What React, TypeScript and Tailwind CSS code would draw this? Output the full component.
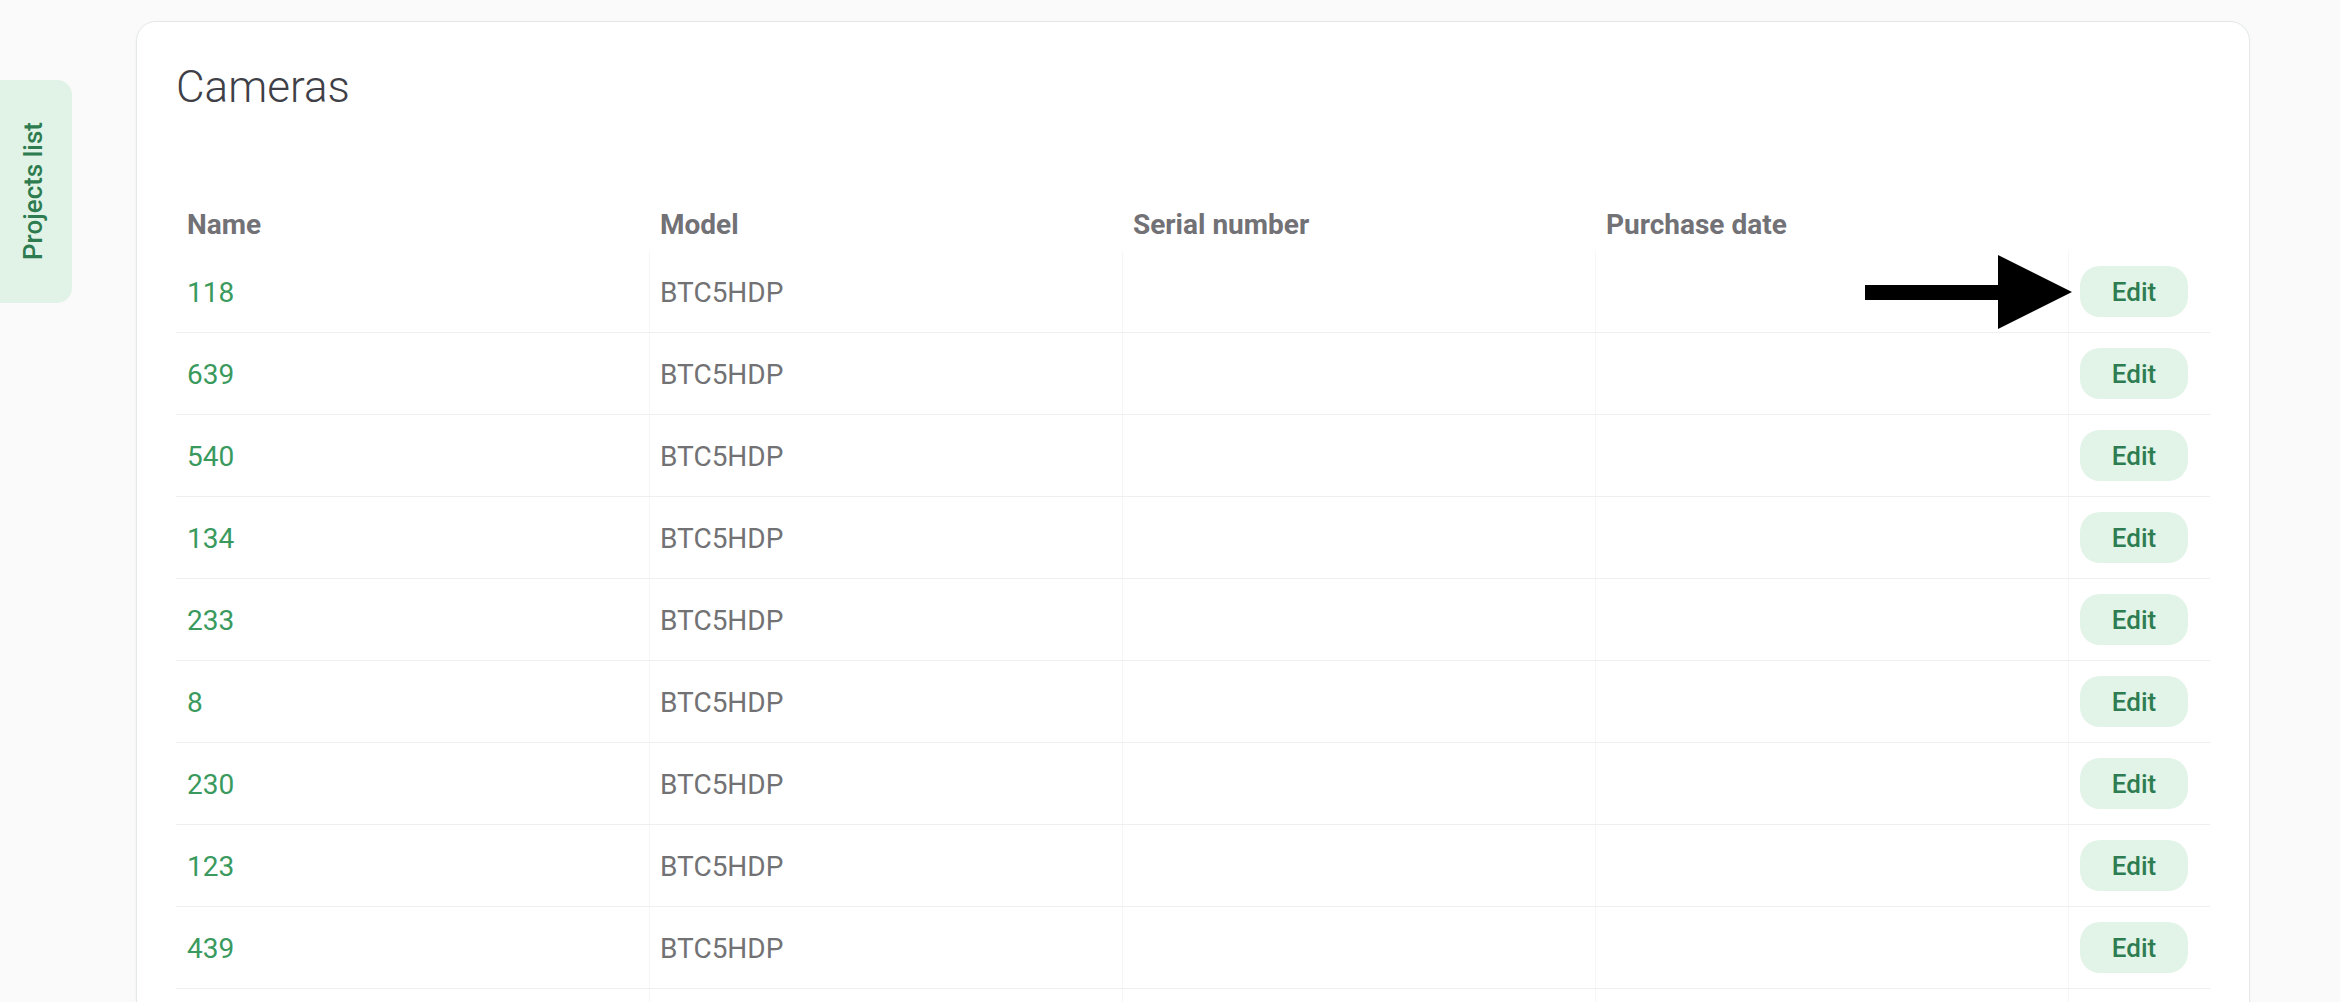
import React from "react";

const rows = ["118", "639", "540", "134", "233", "8", "230", "123", "439"];

export default function App() {
  return (
    <div className="relative min-h-screen bg-[#fafafa] font-['Roboto',sans-serif] overflow-hidden">
      <div className="flex items-start">
        <div className="mt-[80px] w-[72px] h-[223px] shrink-0 rounded-r-[15px] bg-[#e1f3e7] flex items-center justify-center pr-[6px]">
          <span className="[writing-mode:vertical-rl] rotate-180 text-[26px] leading-[28px] font-medium text-[#2e7b4f] whitespace-nowrap">
            Projects list
          </span>
        </div>
        <div className="ml-[64px] mt-[21px] w-[2114px] shrink-0 rounded-[20px] border border-[#e4e9e8] bg-white px-[39px] pt-[39px] pb-[60px] shadow-[0_1px_3px_rgba(0,0,0,0.04)]">
          <h1 className="text-[44px] leading-[52px] font-light text-[#3f3f47]">Cameras</h1>
          <div className="mt-[96px] pb-[10px] flex text-[28px] leading-[32px] font-bold text-[#717176]">
            <div className="w-[473px] pl-[11px]">Name</div>
            <div className="w-[473px] pl-[11px]">Model</div>
            <div className="w-[473px] pl-[11px]">Serial number</div>
            <div className="w-[473px] pl-[11px]">Purchase date</div>
            <div className="w-[142px]"></div>
          </div>
          {rows.map((n) => (
            <div key={n} className="flex h-[82px] border-b border-[#efefef] text-[28px] leading-[32px]">
              <div className="w-[473px] pl-[11px] pt-[3px] flex items-center text-[#3a9a5e]">{n}</div>
              <div className="w-[473px] pl-[10px] pt-[3px] border-l border-[#f6f6f6] flex items-center text-[#727275]">BTC5HDP</div>
              <div className="w-[473px] border-l border-[#f6f6f6]"></div>
              <div className="w-[473px] border-l border-[#f6f6f6]"></div>
              <div className="w-[142px] pl-[11px] border-l border-[#f6f6f6] flex items-center">
                <button className="w-[108px] h-[51px] rounded-[20px] bg-[#e2f4e8] text-[26px] font-medium text-[#2e7d52] leading-none">
                  Edit
                </button>
              </div>
            </div>
          ))}
          <div className="flex h-[60px]">
            <div className="w-[473px]"></div>
            <div className="w-[473px] border-l border-[#f6f6f6]"></div>
            <div className="w-[473px] border-l border-[#f6f6f6]"></div>
            <div className="w-[473px] border-l border-[#f6f6f6]"></div>
            <div className="w-[142px] border-l border-[#f6f6f6]"></div>
          </div>
        </div>
      </div>
      <svg
        className="absolute left-[1865px] top-[255px]"
        width="208"
        height="75"
        viewBox="0 0 208 75"
      >
        <rect x="0" y="30" width="135" height="15" fill="#000" />
        <polygon points="133,0 133,74 207,37" fill="#000" />
      </svg>
    </div>
  );
}
